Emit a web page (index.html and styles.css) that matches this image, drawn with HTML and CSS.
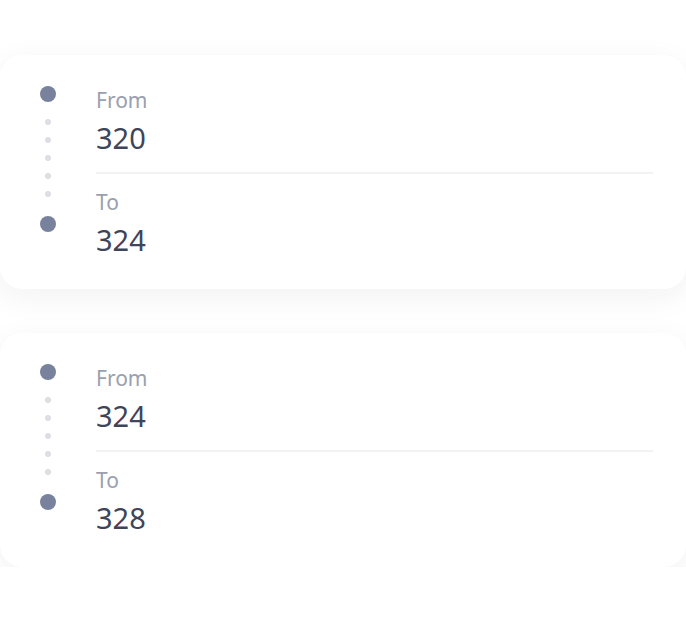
FILE: index.html
```html
<!DOCTYPE html>
<html>
<head>
<meta charset="utf-8">
<link rel="stylesheet" href="styles.css">
</head>
<body>
<div class="list">
  <div class="card">
    <div class="track">
      <span class="dot"></span>
      <span class="dots"><i></i><i></i><i></i><i></i><i></i></span>
      <span class="dot"></span>
    </div>
    <div class="info">
      <div class="row">
        <div class="label">From</div>
        <div class="value">320</div>
      </div>
      <div class="divider"></div>
      <div class="row">
        <div class="label">To</div>
        <div class="value">324</div>
      </div>
    </div>
  </div>
  <div class="card">
    <div class="track">
      <span class="dot"></span>
      <span class="dots"><i></i><i></i><i></i><i></i><i></i></span>
      <span class="dot"></span>
    </div>
    <div class="info">
      <div class="row">
        <div class="label">From</div>
        <div class="value">324</div>
      </div>
      <div class="divider"></div>
      <div class="row">
        <div class="label">To</div>
        <div class="value">328</div>
      </div>
    </div>
  </div>
</div>
</body>
</html>
```
FILE: styles.css
```css
html, body {
  margin: 0;
  padding: 0;
  background: #ffffff;
  font-family: "Noto Sans", "Open Sans", sans-serif;
}
.list {
  display: flex;
  flex-direction: column;
  gap: 44px;
  padding-top: 55px;
}
.card {
  box-sizing: border-box;
  width: 686px;
  height: 234px;
  background: #ffffff;
  border-radius: 22px;
  box-shadow: 0 8px 32px rgba(30, 40, 70, 0.06);
  display: flex;
  padding: 31px 33px 0 40px;
}
.track {
  width: 16px;
  display: flex;
  flex-direction: column;
  align-items: center;
}
.dot {
  width: 16px;
  height: 16px;
  border-radius: 50%;
  background: #79829c;
  display: block;
}
.dots {
  display: flex;
  flex-direction: column;
  align-items: center;
  gap: 12px;
  margin: 17px 0 19px;
}
.dots i {
  display: block;
  width: 6px;
  height: 6px;
  border-radius: 50%;
  background: #dcdfe5;
}
.info {
  flex: 1;
  margin-left: 40px;
  padding-top: 2px;
  display: flex;
  flex-direction: column;
}
.row {
  display: flex;
  flex-direction: column;
  gap: 8px;
}
.label {
  font-size: 21px;
  line-height: 24px;
  color: #9aa0af;
}
.value {
  font-size: 29px;
  line-height: 36px;
  color: #3e4558;
}
.divider {
  height: 2px;
  background: #f1f2f4;
  margin: 16px 0 16px;
}
```
